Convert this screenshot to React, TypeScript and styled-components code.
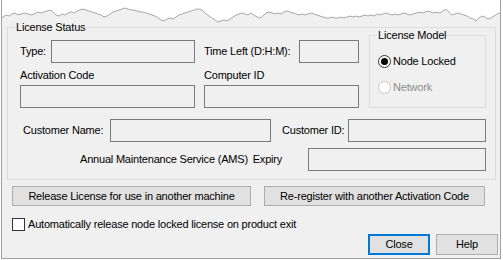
import React from "react";
import styled, { createGlobalStyle } from "styled-components";

const GlobalStyle = createGlobalStyle`
  html, body {
    margin: 0;
    padding: 0;
    background: #ffffff;
  }
  body {
    font-family: "Liberation Sans", Arial, sans-serif;
    font-size: 11px;
    letter-spacing: -0.2px;
    color: #000000;
  }
`;

const Frame = styled.div`
  position: relative;
  box-sizing: border-box;
  width: 500px;
  height: 259px;
  margin-left: 1px;
  padding: 27px 2px 0 5px;
  background: #f0f0f0;
  border: 1px solid #a0a0a0;
  border-top: none;
  display: flex;
  flex-direction: column;
  overflow: hidden;
`;

const TornEdge = styled.svg`
  position: absolute;
  top: 0;
  left: -2px;
  width: 503px;
  height: 26px;
`;

const Group = styled.div<{ $w: number; $h: number }>`
  position: relative;
  box-sizing: border-box;
  width: ${(p) => p.$w}px;
  height: ${(p) => p.$h}px;
  border: 1px solid #dcdcdc;
  flex-shrink: 0;
`;

const Legend = styled.span<{ $left: number }>`
  position: absolute;
  top: -7px;
  left: ${(p) => p.$left}px;
  padding: 0 1px;
  line-height: 13px;
  background: #f0f0f0;
  white-space: nowrap;
`;

const TopSection = styled.div`
  display: flex;
  margin-top: 7px;
  padding-left: 12px;
`;

const Column = styled.div<{ $w: number; $ml?: number }>`
  display: flex;
  flex-direction: column;
  width: ${(p) => p.$w}px;
  margin-left: ${(p) => p.$ml ?? 0}px;
  padding-top: 5px;
`;

const Row = styled.div<{ $mt?: number; $ml?: number; $pr?: number }>`
  display: flex;
  align-items: center;
  margin-top: ${(p) => p.$mt ?? 0}px;
  padding-left: ${(p) => p.$ml ?? 0}px;
  padding-right: ${(p) => p.$pr ?? 0}px;
`;

const Label = styled.span<{ $w?: number; $ml?: number }>`
  display: block;
  line-height: 13px;
  white-space: nowrap;
  width: ${(p) => (p.$w ? `${p.$w}px` : "auto")};
  margin-left: ${(p) => p.$ml ?? 0}px;
  flex-shrink: 0;
`;

const StackLabel = styled(Label)`
  margin-top: 6px;
  margin-bottom: 3px;
`;

const Expiry = styled.span`
  margin-left: 2px;
`;

const TextBox = styled.div<{ $w: number; $auto?: boolean }>`
  box-sizing: border-box;
  width: ${(p) => p.$w}px;
  height: 23px;
  border: 1px solid #7a7a7a;
  background: #f0f0f0;
  flex-shrink: 0;
  margin-left: ${(p) => (p.$auto ? "auto" : "0")};
`;

const ModelGroup = styled(Group)`
  margin-left: 10px;
  padding: 19px 0 0 8px;
  display: flex;
  flex-direction: column;
  gap: 13px;
`;

const Radio = styled.div<{ $disabled?: boolean }>`
  display: flex;
  align-items: center;
  gap: 2px;
  height: 13px;
  line-height: 13px;
  color: ${(p) => (p.$disabled ? "#8d8d8d" : "#000000")};
`;

const RadioCircle = styled.span<{ $checked?: boolean; $disabled?: boolean }>`
  box-sizing: border-box;
  width: 13px;
  height: 13px;
  border-radius: 50%;
  border: 1px solid ${(p) => (p.$disabled ? "#c8c8c8" : "#333333")};
  background: #ffffff;
  display: flex;
  align-items: center;
  justify-content: center;
  flex-shrink: 0;

  &::after {
    content: "";
    display: ${(p) => (p.$checked ? "block" : "none")};
    width: 7px;
    height: 7px;
    border-radius: 50%;
    background: #000000;
  }
`;

const ButtonRow = styled.div<{ $mt: number; $end?: boolean }>`
  display: flex;
  gap: 13px;
  margin-top: ${(p) => p.$mt}px;
  padding-left: 5px;
  justify-content: ${(p) => (p.$end ? "flex-end" : "flex-start")};
`;

const DialogButtons = styled(ButtonRow)`
  gap: 6px;
  padding-left: 0;
`;

const Button = styled.button<{ $w: number; $h?: number; $default?: boolean }>`
  box-sizing: border-box;
  width: ${(p) => p.$w}px;
  height: ${(p) => p.$h ?? 20}px;
  padding: 0;
  margin: 0;
  font: inherit;
  letter-spacing: inherit;
  color: #000000;
  background: #e1e1e1;
  border: ${(p) => (p.$default ? "2px solid #0078d7" : "1px solid #adadad")};
  border-radius: 0;
  line-height: 13px;
  white-space: nowrap;
`;

const CheckRow = styled.label`
  display: flex;
  align-items: center;
  gap: 3px;
  margin-top: 12px;
  padding-left: 5px;
  line-height: 13px;
`;

const CheckBox = styled.span`
  box-sizing: border-box;
  width: 13px;
  height: 13px;
  border: 1px solid #333333;
  background: #ffffff;
  flex-shrink: 0;
`;

const tornPoints: [number, number][] = [
  [0, 19], [3, 17], [6, 15], [9, 16], [12, 14], [15, 13], [18, 15], [21, 14], [25, 13],
  [28, 14], [31, 15], [34, 14], [38, 12], [41, 13], [44, 12], [47, 11], [50, 10], [53, 12],
  [56, 15], [59, 16], [62, 14], [65, 15], [68, 13], [71, 12], [74, 13], [77, 11], [80, 10],
  [83, 9], [86, 10], [89, 11], [92, 12], [95, 13], [98, 14], [101, 15], [104, 17], [107, 16],
  [110, 14], [113, 12], [116, 11], [119, 10], [122, 9], [125, 8], [128, 9], [131, 10],
  [134, 10], [137, 11], [140, 12], [143, 12], [146, 13], [149, 14], [152, 15], [155, 16],
  [158, 18], [161, 20], [164, 21], [167, 19], [170, 18], [173, 19], [176, 17], [179, 15],
  [182, 14], [185, 13], [188, 12], [191, 11], [194, 10], [197, 9], [200, 9], [203, 11],
  [206, 14], [209, 16], [212, 18], [215, 20], [218, 22], [221, 21], [224, 20], [227, 21],
  [230, 19], [233, 17], [236, 15], [239, 14], [242, 13], [245, 14], [248, 15], [251, 13],
  [254, 15], [257, 17], [260, 18], [263, 16], [266, 13], [269, 12], [272, 13], [275, 14],
  [278, 13], [281, 14], [284, 12], [287, 11], [290, 12], [293, 13], [296, 14], [299, 15],
  [302, 14], [305, 15], [308, 14], [311, 13], [314, 14], [317, 15], [320, 16], [323, 17],
  [326, 18], [329, 18], [332, 17], [335, 18], [338, 18], [341, 17], [344, 18], [347, 17],
  [350, 16], [353, 17], [356, 16], [359, 17], [362, 16], [365, 15], [368, 16], [371, 15],
  [374, 16], [377, 14], [380, 15], [383, 14], [386, 13], [389, 14], [392, 15], [395, 14],
  [398, 15], [401, 14], [404, 13], [407, 14], [410, 15], [413, 14], [416, 13], [419, 12],
  [422, 13], [425, 12], [428, 11], [431, 12], [434, 13], [437, 12], [440, 13], [443, 11],
  [446, 9], [449, 12], [452, 15], [455, 14], [458, 13], [461, 14], [464, 15], [467, 16],
  [470, 18], [473, 19], [476, 21], [479, 18], [482, 16], [485, 17], [488, 19], [491, 18],
  [494, 16], [497, 14], [500, 13], [503, 12],
];

const linePts = tornPoints.map(([x, y]) => `${x},${y}`).join(" ");
const fillPts = `0,0 503,0 ${[...tornPoints].reverse().map(([x, y]) => `${x},${y}`).join(" ")}`;

export default function App() {
  return (
    <>
      <GlobalStyle />
      <Frame>
        <TornEdge viewBox="0 0 503 26">
          <polygon points={fillPts} fill="#ffffff" />
          <polyline points={linePts} fill="none" stroke="#a8a8a8" strokeWidth="1" />
        </TornEdge>

        <Group $w={489} $h={153}>
          <Legend $left={7}>License Status</Legend>

          <TopSection>
            <Column $w={175}>
              <Row>
                <Label $w={31}>Type:</Label>
                <TextBox $w={144} />
              </Row>
              <StackLabel>Activation Code</StackLabel>
              <TextBox $w={175} />
            </Column>

            <Column $w={155} $ml={9}>
              <Row>
                <Label $w={95}>Time Left (D:H:M):</Label>
                <TextBox $w={60} />
              </Row>
              <StackLabel>Computer ID</StackLabel>
              <TextBox $w={155} />
            </Column>

            <ModelGroup $w={117} $h={73}>
              <Legend $left={7}>License Model</Legend>
              <Radio>
                <RadioCircle $checked />
                Node Locked
              </Radio>
              <Radio $disabled>
                <RadioCircle $disabled />
                Network
              </Radio>
            </ModelGroup>
          </TopSection>

          <Row $mt={11}>
            <Label $w={87} $ml={15}>Customer Name:</Label>
            <TextBox $w={161} />
            <Label $w={66} $ml={11}>Customer ID:</Label>
            <TextBox $w={138} />
          </Row>

          <Row $mt={6} $ml={72} $pr={9}>
            <Label>
              Annual Maintenance Service (AMS) <Expiry>Expiry</Expiry>
            </Label>
            <TextBox $w={178} $auto />
          </Row>
        </Group>

        <ButtonRow $mt={6}>
          <Button $w={239}>Release License for use in another machine</Button>
          <Button $w={221}>Re-register with another Activation Code</Button>
        </ButtonRow>

        <CheckRow>
          <CheckBox />
          Automatically release node locked license on product exit
        </CheckRow>

        <DialogButtons $mt={3} $end>
          <Button $w={62} $h={21} $default>Close</Button>
          <Button $w={62} $h={21}>Help</Button>
        </DialogButtons>
      </Frame>
    </>
  );
}
